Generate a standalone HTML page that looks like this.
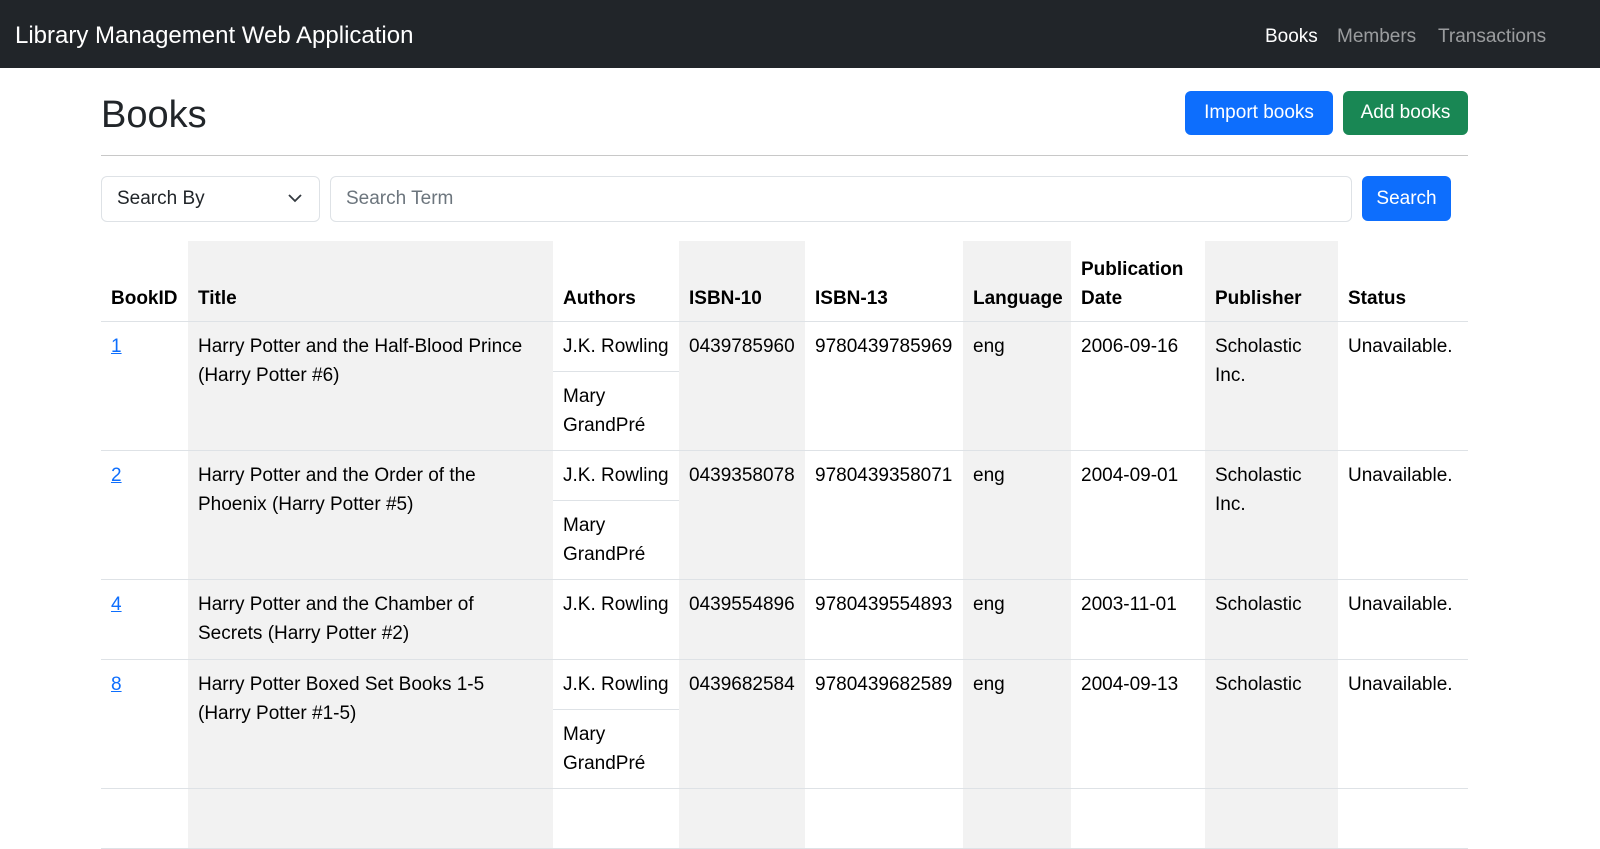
<!DOCTYPE html>
<html><head><meta charset="utf-8"><style>
*{box-sizing:border-box;margin:0;padding:0}
body{width:1600px;height:811px;overflow:hidden;background:#fff;font-family:"Liberation Sans",sans-serif;color:#212529;font-size:19px;position:relative}
.nav{position:absolute;left:0;top:0;width:1600px;height:68px;background:#212529}
.abs{position:absolute;white-space:nowrap}
.btn{position:absolute;color:#fff;border-radius:6px;font-size:19px;display:flex;align-items:center;justify-content:center}
.inp{position:absolute;border:1px solid #dee2e6;border-radius:6px;height:46px;top:176px;display:flex;align-items:center;padding-left:15px;font-size:19px}
table{position:absolute;left:101px;top:241px;border-collapse:collapse;table-layout:fixed;width:1367px}
td,th{vertical-align:top;padding:10px 10px;line-height:29px;text-align:left;border-bottom:1px solid #dee2e6;color:#000}
th{vertical-align:bottom;font-weight:bold;height:80px;padding-bottom:8px}
.s{background:#f2f2f2}
td.a{padding:0}
td.a div{padding:10px 10px;line-height:29px}
td.a div+div{border-top:1px solid #dee2e6}
a{color:#0d6efd}
</style></head><body>
<div class="nav"></div>
<div class="abs" style="left:15px;top:22px;color:#fff;font-size:24px">Library Management Web Application</div>
<div class="abs" style="left:1265px;top:26px;color:#fff;font-size:19px">Books</div>
<div class="abs" style="left:1337px;top:26px;color:rgba(255,255,255,.55);font-size:19px">Members</div>
<div class="abs" style="left:1438px;top:26px;color:rgba(255,255,255,.55);font-size:19px">Transactions</div>
<div class="abs" style="left:101px;top:94px;font-size:38px;font-weight:300">Books</div>
<div class="btn" style="left:1185px;top:91px;width:148px;height:44px;background:#0d6efd">Import books</div>
<div class="btn" style="left:1343px;top:91px;width:125px;height:44px;background:#198754">Add books</div>
<div class="abs" style="left:101px;top:155px;width:1367px;height:1px;background:#c8c8c8"></div>
<div class="inp" style="left:101px;width:219px">Search By
<svg style="position:absolute;left:186px;top:16px" width="14" height="10" viewBox="0 0 14 10"><path d="M1 2l6 6 6-6" fill="none" stroke="#343a40" stroke-width="1.8"/></svg></div>
<div class="inp" style="left:330px;width:1022px;color:#6c757d">Search Term</div>
<div class="btn" style="left:1362px;top:176px;width:89px;height:45px;background:#0d6efd">Search</div>
<table>
<colgroup><col style="width:87px"><col style="width:365px"><col style="width:126px"><col style="width:126px"><col style="width:158px"><col style="width:108px"><col style="width:134px"><col style="width:133px"><col style="width:130px"></colgroup>
<tr><th>BookID</th><th class="s">Title</th><th>Authors</th><th class="s">ISBN-10</th><th>ISBN-13</th><th class="s">Language</th><th>Publication Date</th><th class="s">Publisher</th><th>Status</th></tr>
<tr style="height:129px"><td><a href="#">1</a></td><td class="s">Harry Potter and the Half-Blood Prince<br>(Harry Potter #6)</td><td class="a"><div>J.K. Rowling</div><div>Mary GrandPré</div></td><td class="s">0439785960</td><td>9780439785969</td><td class="s">eng</td><td>2006-09-16</td><td class="s">Scholastic Inc.</td><td>Unavailable.</td></tr>
<tr style="height:129px"><td><a href="#">2</a></td><td class="s">Harry Potter and the Order of the<br>Phoenix (Harry Potter #5)</td><td class="a"><div>J.K. Rowling</div><div>Mary GrandPré</div></td><td class="s">0439358078</td><td>9780439358071</td><td class="s">eng</td><td>2004-09-01</td><td class="s">Scholastic Inc.</td><td>Unavailable.</td></tr>
<tr style="height:80px"><td><a href="#">4</a></td><td class="s">Harry Potter and the Chamber of<br>Secrets (Harry Potter #2)</td><td class="a"><div>J.K. Rowling</div></td><td class="s">0439554896</td><td>9780439554893</td><td class="s">eng</td><td>2003-11-01</td><td class="s">Scholastic</td><td>Unavailable.</td></tr>
<tr style="height:129px"><td><a href="#">8</a></td><td class="s">Harry Potter Boxed Set Books 1-5<br>(Harry Potter #1-5)</td><td class="a"><div>J.K. Rowling</div><div>Mary GrandPré</div></td><td class="s">0439682584</td><td>9780439682589</td><td class="s">eng</td><td>2004-09-13</td><td class="s">Scholastic</td><td>Unavailable.</td></tr>
<tr style="height:60px"><td></td><td class="s"></td><td></td><td class="s"></td><td></td><td class="s"></td><td></td><td class="s"></td><td></td></tr>
</table>
</body></html>
